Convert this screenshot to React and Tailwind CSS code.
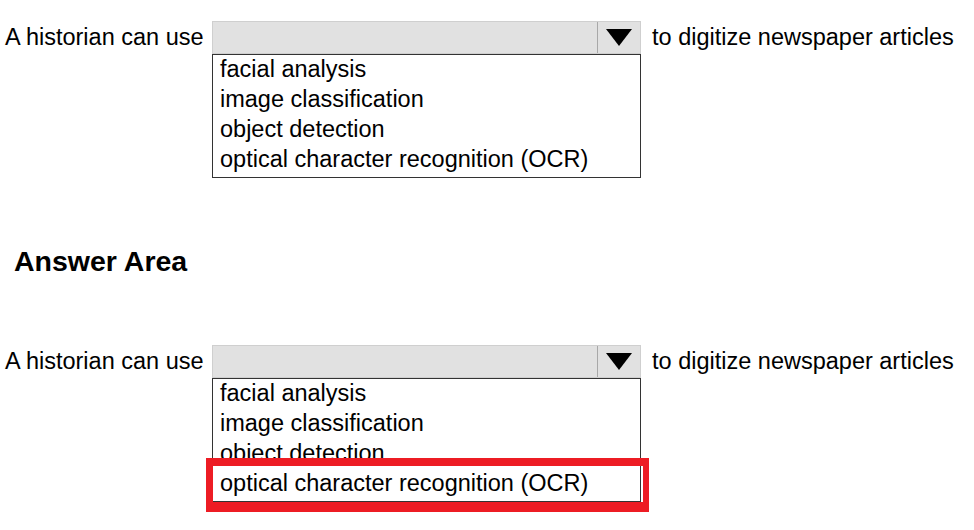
const options = [
  'facial analysis',
  'image classification',
  'object detection',
  'optical character recognition (OCR)',
]

function DropdownRow({ highlight }) {
  return (
    <div className="flex items-start">
      <span className="w-[207px] h-[32px] leading-[32px] text-[23.5px] whitespace-nowrap">
        A historian can use
      </span>

      {/* select + open list */}
      <div className="w-[429px] flex flex-col">
        <div className="h-[33px] flex bg-[#e1e1e1] border border-[#cfcfcf]">
          <div className="flex-1" />
          <div className="w-[43px] border-l border-[#a8a8a8] flex items-center justify-center">
            <svg width="26" height="17" viewBox="0 0 26 17">
              <polygon points="0,0 26,0 13,17" fill="#000" />
            </svg>
          </div>
        </div>
        <div className="relative w-[429px] border border-[#333] bg-white pl-[7px] pb-[2px]">
          {options.map((o) => (
            <div key={o} className="h-[30px] leading-[28px] text-[23.5px] whitespace-nowrap">
              {o}
            </div>
          ))}
          {highlight && (
            <div className="absolute left-[-7px] top-[79px] w-[443px] h-[54px] border-[#ed1c24] border-t-[8px] border-l-[7px] border-r-[6px] border-b-[10px]" />
          )}
        </div>
      </div>

      <span className="ml-[11px] h-[33px] leading-[32px] text-[23.5px] whitespace-nowrap">
        to digitize newspaper articles
      </span>
    </div>
  )
}

export default function App() {
  return (
    <div className="w-[974px] h-[530px] bg-white text-black font-['Liberation_Sans',Arial,sans-serif] pl-[5px] pt-[21px] overflow-hidden">
      <DropdownRow />

      <p className="mt-[67px] pl-[9px] h-[32px] leading-[32px] text-[28.5px] font-bold">
        Answer Area
      </p>

      <div className="mt-[68px]">
        <DropdownRow highlight />
      </div>
    </div>
  )
}
